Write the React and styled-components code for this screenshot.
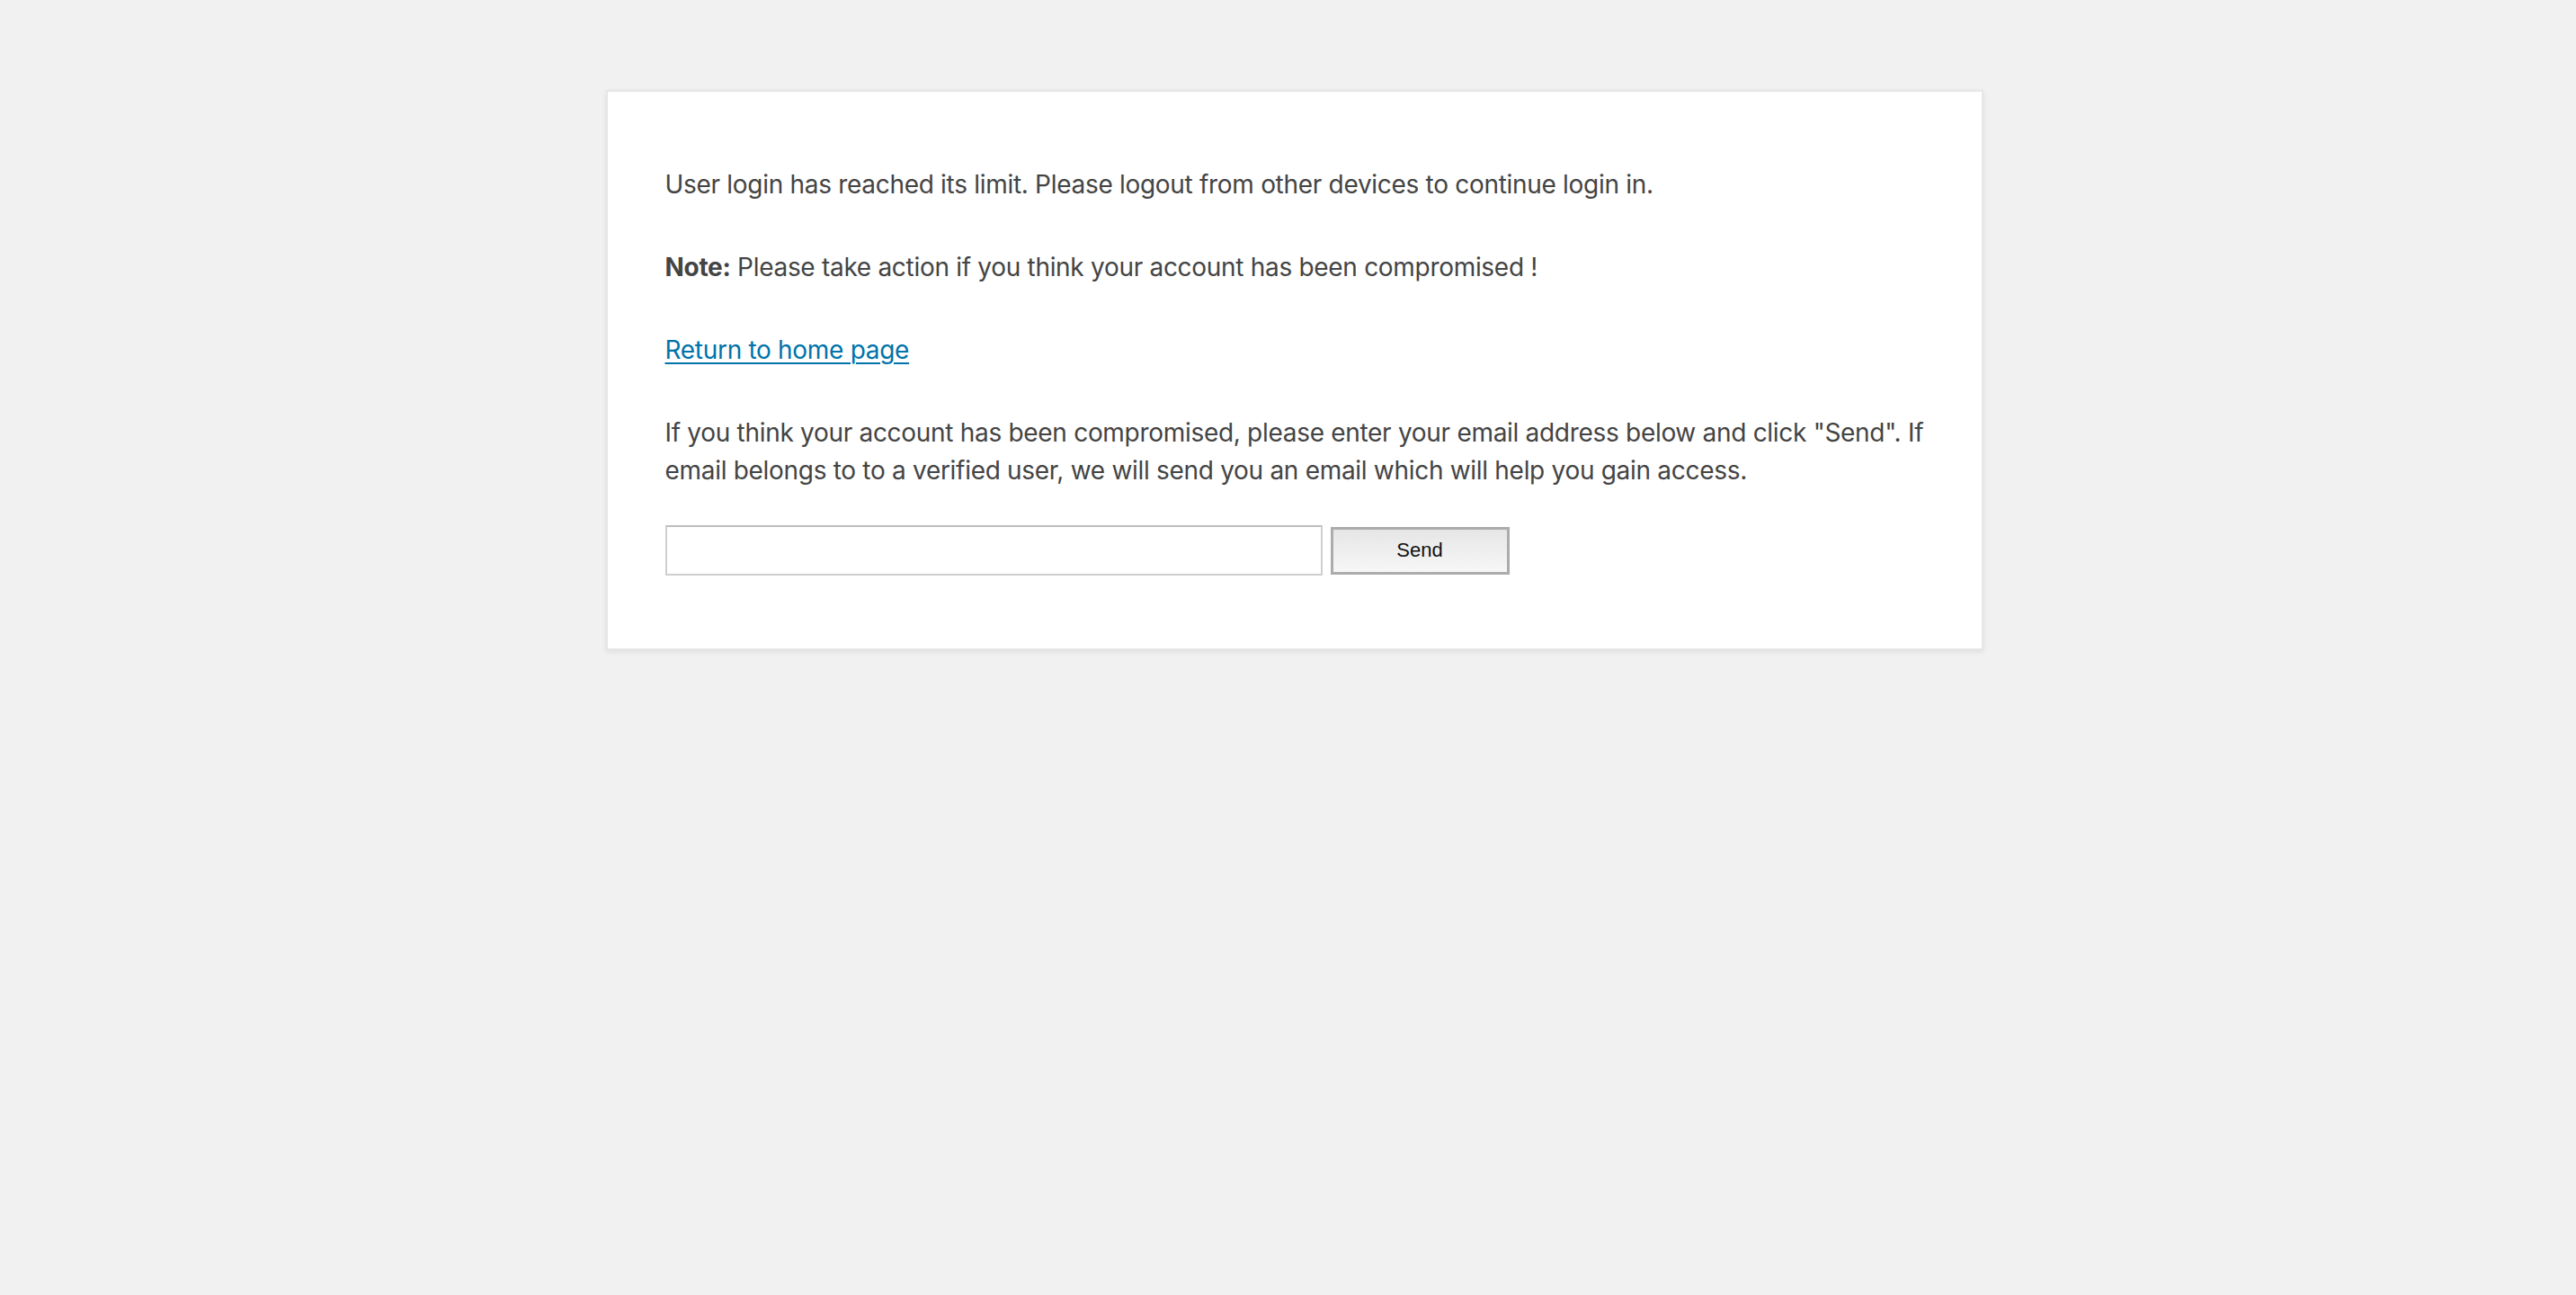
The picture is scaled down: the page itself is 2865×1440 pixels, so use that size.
import React from "react"
import styled, { createGlobalStyle } from "styled-components"

const GlobalStyle = createGlobalStyle`
  html {
    background: #f1f1f1;
  }
  body {
    margin: 0;
    background: #f1f1f1;
    font-family: Inter, Roboto, "Liberation Sans", sans-serif;
  }
`

const Page = styled.div`
  padding: 100px 0 64px 14px;
`

const Card = styled.div`
  box-sizing: content-box;
  max-width: 1400px;
  margin: 0 auto;
  padding: 32px 64px 81px;
  background: #fff;
  border: 2px solid #e4e6e8;
  box-shadow: 0 2px 6px rgba(0, 0, 0, 0.08);
  color: #444;
`

const Text = styled.p`
  font-size: 28px;
  line-height: 42px;
  letter-spacing: -0.3px;
  margin: 50px 0 40px;
`

const Link = styled.a`
  color: #0073aa;
  text-decoration: underline;
  text-underline-offset: 4px;
  text-decoration-thickness: 2px;
`

const Form = styled.form`
  display: flex;
  align-items: center;
  gap: 9px;
  margin: 0;
`

const EmailInput = styled.input`
  box-sizing: border-box;
  width: 731px;
  height: 56px;
  margin: 0;
  padding: 4px 10px;
  border: 2px solid #cfcfcf;
  border-top-color: #bdbdbd;
  background: #fff;
  font-size: 26px;
  outline: none;
`

const SendButton = styled.button`
  box-sizing: border-box;
  width: 199px;
  height: 53px;
  margin: 0;
  border: 3px solid #acacac;
  background: linear-gradient(#e6e6e6, #f7f7f7);
  color: #111;
  font-family: "Liberation Sans", Arial, sans-serif;
  font-size: 22px;
  cursor: pointer;
`

export default function App() {
  return (
    <>
      <GlobalStyle />
      <Page>
        <Card>
          <Text>
            User login has reached its limit. Please logout from other devices to continue login in.
          </Text>
          <Text>
            <strong>Note:</strong> Please take action if you think your account has been compromised !
          </Text>
          <Text>
            <Link href="#">Return to home page</Link>
          </Text>
          <Text>
            If you think your account has been compromised, please enter your email address below and
            click "Send". If email belongs to to a verified user, we will send you an email which will
            help you gain access.
          </Text>
          <Form onSubmit={(e) => e.preventDefault()}>
            <EmailInput type="email" />
            <SendButton type="submit">Send</SendButton>
          </Form>
        </Card>
      </Page>
    </>
  )
}
